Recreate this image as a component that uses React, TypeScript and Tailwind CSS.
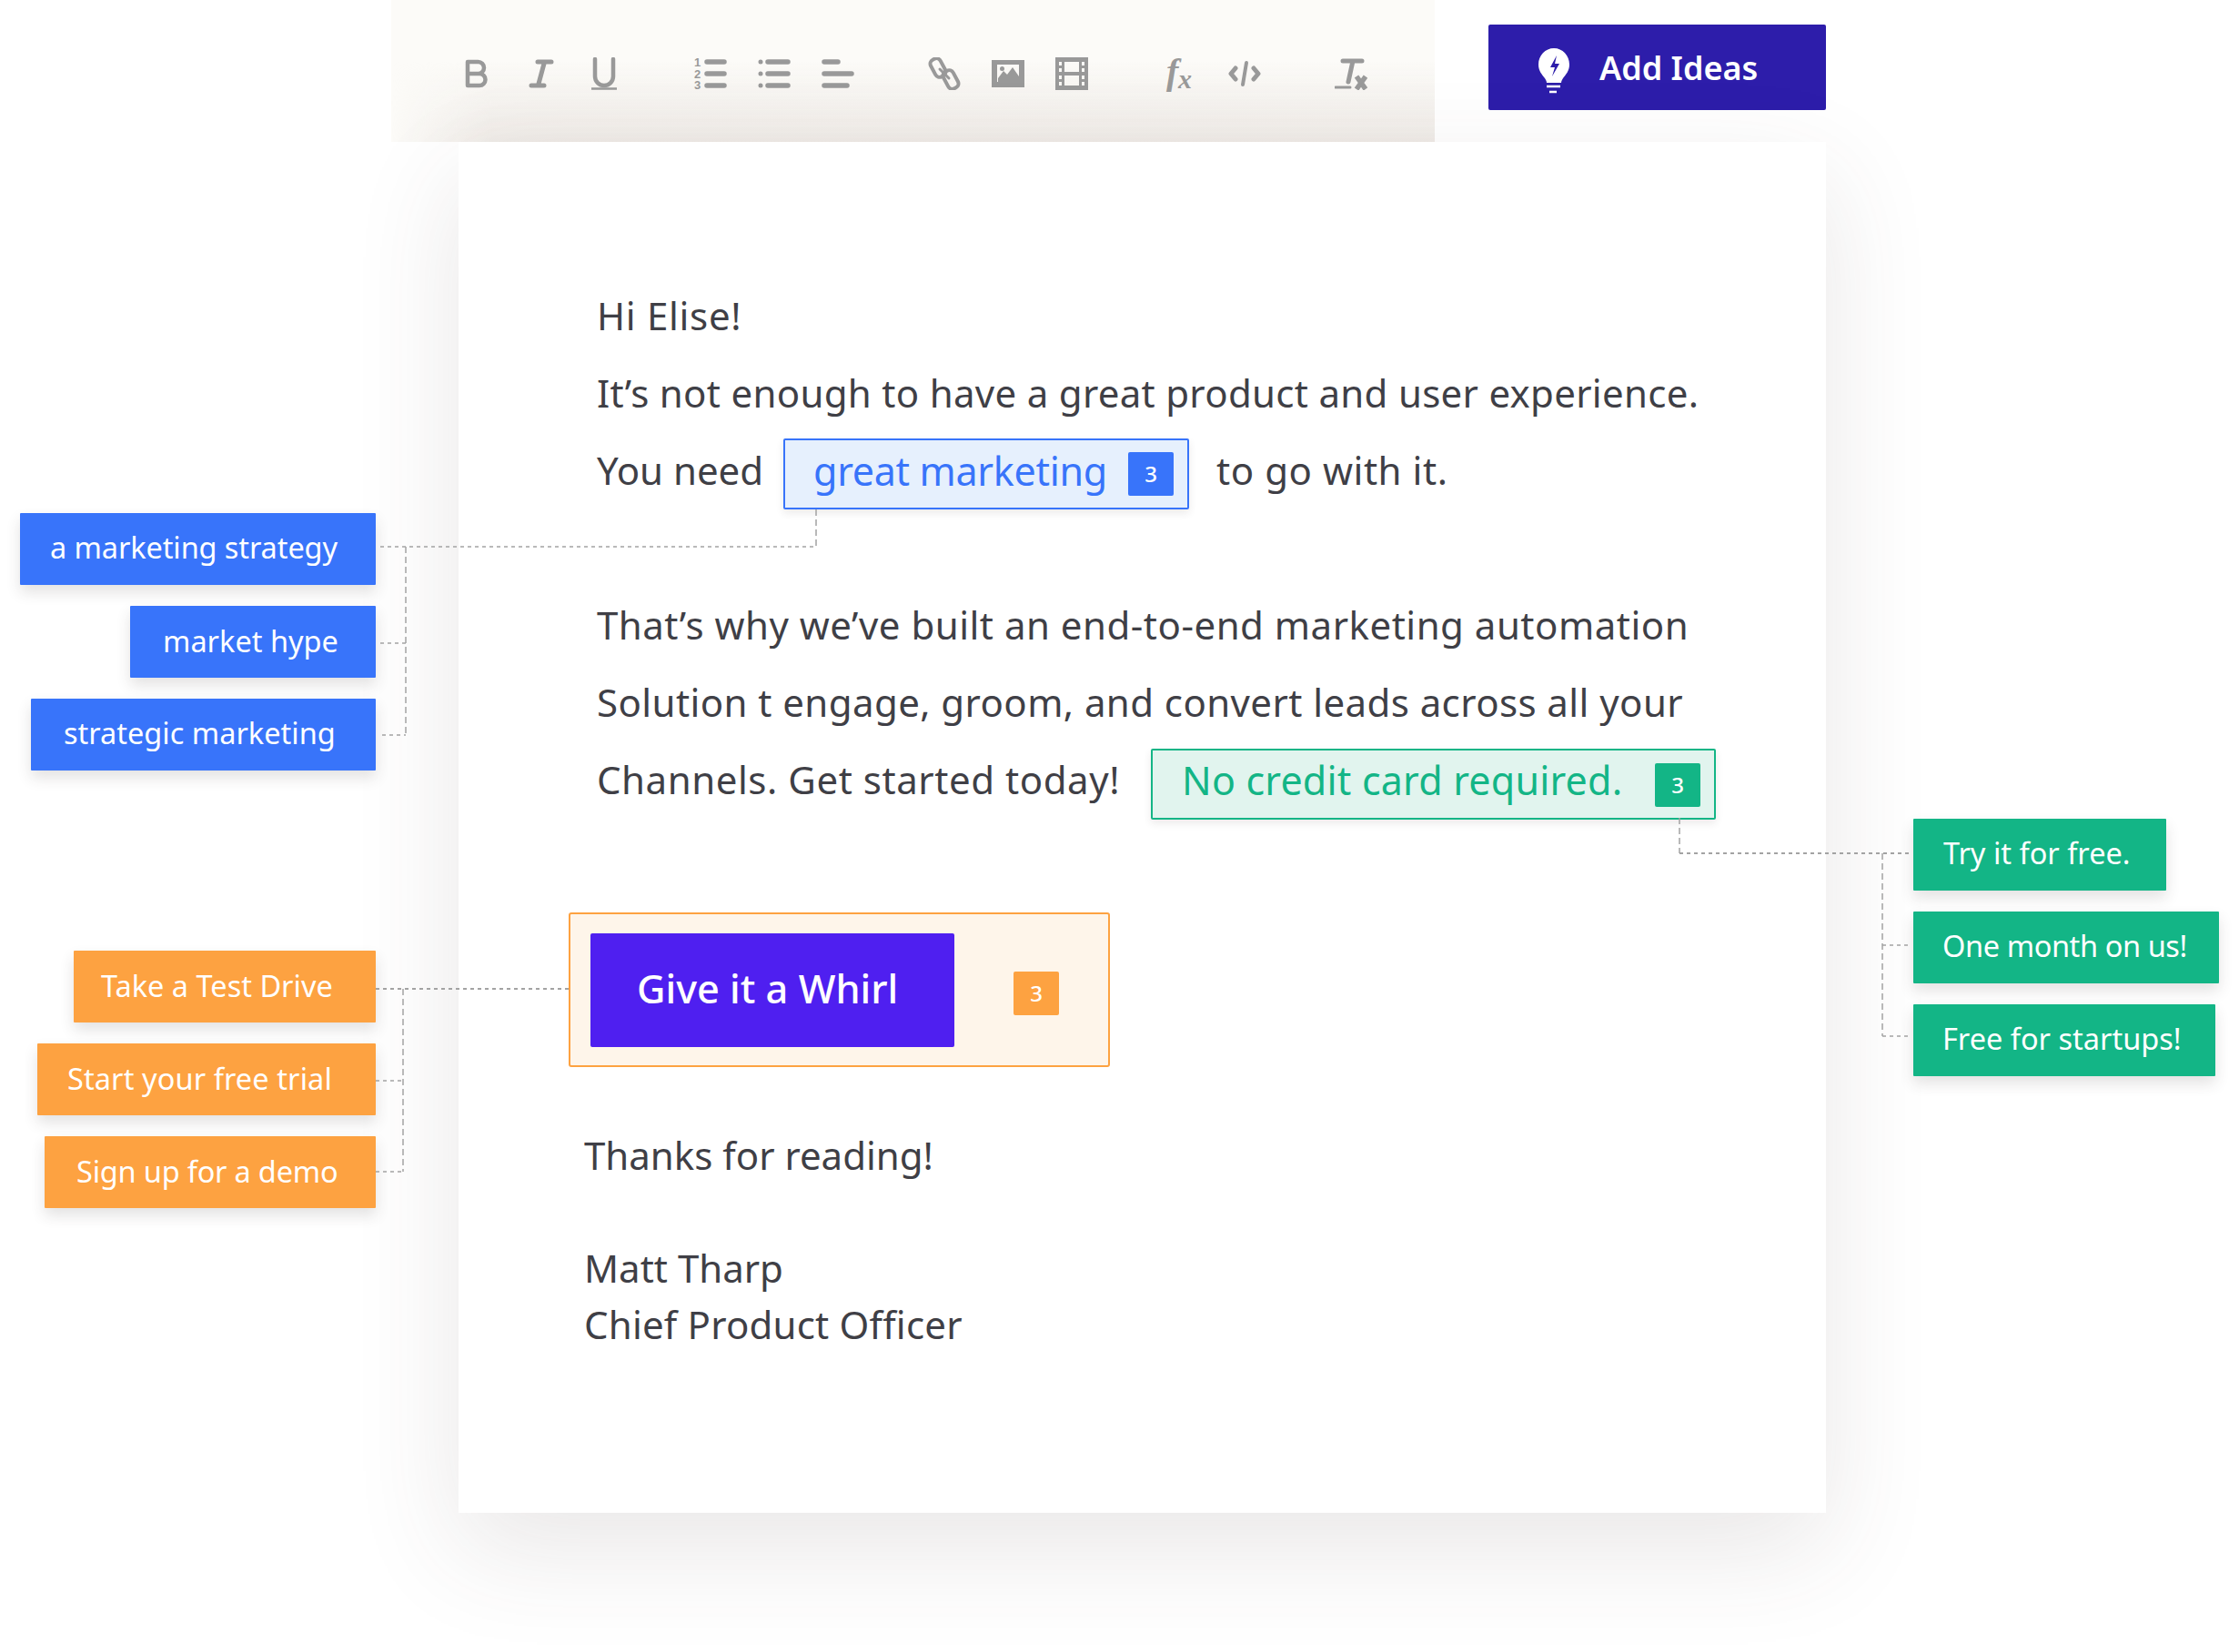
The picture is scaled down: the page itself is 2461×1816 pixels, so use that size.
import React from 'react';

const FONT = 'font-["Noto_Sans",sans-serif]';

function Cell({ children }: { children: React.ReactNode }) {
  return <div className="w-[70px] h-[36px] flex justify-center items-center">{children}</div>;
}

function Ico({ children }: { children: React.ReactNode }) {
  return (
    <svg width="36" height="36" viewBox="0 0 36 36" fill="none" stroke="#999" strokeWidth="4.500" strokeLinecap="round" strokeLinejoin="round">
      {children}
    </svg>
  );
}

function Toolbar() {
  return (
    <div className="relative w-[1147px] h-[156px] ml-[430px] pl-[59px] pt-[6px] flex items-center gap-[47px] bg-[#fcfbf8]">
      <div className="absolute left-0 right-0 bottom-0 h-[90px] bg-gradient-to-b from-transparent to-[#efebe7] [mask-image:linear-gradient(to_right,transparent,black_110px)]" />
      <div className="relative flex">
        <Cell><Ico><path d="M8 5h11.500a6.500 6.500 0 0 1 0 13H8zM8 18h13a6.500 6.500 0 0 1 0 13H8z" /></Ico></Cell>
        <Cell><Ico><path d="M15 5h15M8 31h14M22.500 5 15.500 31" strokeWidth="5" /></Ico></Cell>
        <Cell><Ico><path d="M8 2v19a10 10 0 0 0 20 0V2" /><path d="M4 34.500h28" strokeWidth="2.500" strokeLinecap="butt" /></Ico></Cell>
      </div>
      <div className="relative flex">
        <Cell>
          <svg width="44" height="44" viewBox="-4 -4 44 44" fill="none" stroke="#999" strokeLinecap="round">
            <path d="M14 5h19M14 18h19M14 31h19" strokeWidth="5.500" />
            <text x="0" y="10" fontSize="13" fontWeight="700" fill="#999" stroke="none" fontFamily="Liberation Sans, sans-serif">1</text>
            <text x="0" y="23" fontSize="13" fontWeight="700" fill="#999" stroke="none" fontFamily="Liberation Sans, sans-serif">2</text>
            <text x="0" y="35" fontSize="13" fontWeight="700" fill="#999" stroke="none" fontFamily="Liberation Sans, sans-serif">3</text>
          </svg>
        </Cell>
        <Cell><Ico><path d="M11 5h22M11 18h22M11 31h22" strokeWidth="5.500" /><circle cx="3" cy="5" r="2.500" fill="#999" stroke="none" /><circle cx="3" cy="18" r="2.500" fill="#999" stroke="none" /><circle cx="3" cy="31" r="2.500" fill="#999" stroke="none" /></Ico></Cell>
        <Cell><Ico><path d="M3 5h15M3 18h30M3 31h25" strokeWidth="5.500" /></Ico></Cell>
      </div>
      <div className="relative flex">
        <Cell>
          <Ico>
            <rect x="5" y="1" width="12" height="21" rx="5" transform="rotate(-28 11 11.500)" strokeWidth="4" />
            <rect x="19" y="14" width="12" height="21" rx="5" transform="rotate(-28 25 24.500)" strokeWidth="4" />
            <path d="M13 13l10 10" strokeWidth="3" />
          </Ico>
        </Cell>
        <Cell>
          <svg width="36" height="36" viewBox="0 0 36 36">
            <path fillRule="evenodd" fill="#999" d="M0 3h36v30H0zM6 8v19h24V8z" />
            <path fill="#999" d="M7 27v-4l6-8 4 4 6-8 7 10v6z" />
            <circle cx="11.500" cy="12.500" r="2.500" fill="#999" />
          </svg>
        </Cell>
        <Cell>
          <svg width="36" height="36" viewBox="0 0 36 36">
            <path fillRule="evenodd" fill="#999" d="M0 0h36v36H0zM10 5v11h16V5zM10 20v11h16V20zM4 5v4h3V5zM4 12v4h3v-4zM4 20v4h3v-4zM4 27v4h3v-4zM29 5v4h3V5zM29 12v4h3v-4zM29 20v4h3v-4zM29 27v4h3v-4z" />
          </svg>
        </Cell>
      </div>
      <div className="relative flex ml-[3px]">
        <Cell>
          <svg width="60" height="60" viewBox="-11 -11 60 60">
            <text x="3" y="30" fontSize="40" fontStyle="italic" fontWeight="700" fill="#999" fontFamily="Liberation Serif, serif">f</text>
            <text x="16" y="35" fontSize="30" fontStyle="italic" fontWeight="700" fill="#999" fontFamily="Liberation Serif, serif">x</text>
          </svg>
        </Cell>
        <Cell><Ico><path d="M8 12 3 18l5 6M28 12l5 6-5 6" strokeWidth="5" /><path d="M20 6 16 30" strokeWidth="4" /></Ico></Cell>
      </div>
      <div className="relative flex">
        <Cell>
          <Ico>
            <path d="M9 4h21M20 4l-5 23" strokeWidth="5" />
            <path d="M1 33h16" strokeWidth="3" />
            <path d="M24 21l10 14M34 21l-10 14" strokeWidth="5.500" strokeLinecap="butt" />
          </Ico>
        </Cell>
      </div>
    </div>
  );
}

function AddIdeas() {
  return (
    <div className="absolute left-[1636px] top-[27px] w-[371px] h-[94px] pl-[55px] rounded-[2px] bg-[#2d1daa] flex items-center gap-[33px] text-white text-[36px] font-semibold">
      <svg width="34" height="50" viewBox="0 0 34 50" className="shrink-0 mt-[8px]">
        <path fill="#fff" d="M17 0C7.500 0 0 8 0 18c0 7 4 11 7 15 1 2 2 3 2 5h16c0-2 1-3 2-5 3-4 7-8 7-15C34 8 26.500 0 17 0z" />
        <path fill="#2d1daa" d="M20 8l-7 13h5l-3 10 8-14h-5z" />
        <path stroke="#fff" strokeWidth="2.500" d="M9 42h15M12 48h8" />
      </svg>
      <span className="mt-[2px]">Add Ideas</span>
    </div>
  );
}

function Badge({ className }: { className: string }) {
  return (
    <span className={`flex items-center justify-center w-[50px] h-[48px] rounded-[2px] text-white text-[24px] font-medium tracking-normal ${className}`}>3</span>
  );
}

function Tag({ children, className }: { children: React.ReactNode; className: string }) {
  return (
    <div className={`h-[79px] flex items-center whitespace-nowrap text-white text-[32.500px] rounded-[1px] shadow-[0_8px_16px_rgba(60,50,50,0.14)] ${className}`}>
      {children}
    </div>
  );
}

function Connectors() {
  return (
    <svg className="absolute left-0 top-0 pointer-events-none" width="2461" height="1816" fill="none" stroke="#a3a3a3" strokeWidth="1.500">
      <g strokeDasharray="4 4">
        <path d="M418 601H897" />
        <path d="M418 707H446M420 808H446" />
        <path d="M413 1087H625" strokeWidth="2" />
        <path d="M413 1188H443M413 1288H443" />
        <path d="M1846 938H2098" strokeWidth="2" />
        <path d="M2069 1039H2098M2069 1139H2098" />
      </g>
      <g strokeDasharray="7 4">
        <path d="M897 560V601M446 601V808" />
        <path d="M443 1087V1288" />
        <path d="M1846 899V938M2069 938V1139" />
      </g>
    </svg>
  );
}

export default function App() {
  return (
    <div className={`relative w-[2461px] h-[1816px] overflow-hidden bg-white ${FONT}`}>
      <Toolbar />
      <AddIdeas />

      <div className="relative w-[1503px] h-[1507px] ml-[504px] pt-[148px] bg-white text-[#3f3f46] text-[42px] shadow-[0_40px_110px_rgba(70,60,60,0.12)]">
        <div className="pl-[152px]">
          <div className="h-[85px] flex items-center tracking-[0.7px]">Hi Elise!</div>
          <div className="h-[85px] flex items-center whitespace-nowrap tracking-[0.3px]">It’s not enough to have a great product and user experience.</div>
          <div className="h-[85px] flex items-center whitespace-nowrap">
            <span className="w-[205px]">You need</span>
            <div className="w-[446px] h-[78px] mt-[9px] pl-[31px] pr-[15px] pb-[6px] flex items-center justify-between rounded-[2px] border-2 border-[#3874fa] bg-[#e6f0fd] text-[#3874fa] text-[43px] tracking-[-0.3px] shadow-[0_4px_8px_rgba(60,50,50,0.1)]">
              <span>great marketing</span>
              <Badge className="bg-[#3874fa] mt-[6px]" />
            </div>
            <span className="ml-[30px] tracking-[0.55px]">to go with it.</span>
          </div>
          <div className="mt-[85px] h-[85px] flex items-center whitespace-nowrap tracking-[0.5px]">That’s why we’ve built an end-to-end marketing automation</div>
          <div className="h-[85px] flex items-center whitespace-nowrap tracking-[0.42px]">Solution t engage, groom, and convert leads across all your</div>
          <div className="h-[85px] flex items-center whitespace-nowrap">
            <span className="w-[609px] tracking-[0.55px]">Channels. Get started today!</span>
            <div className="w-[621px] h-[78px] mt-[11px] pl-[32px] pr-[15px] pb-[7px] flex items-center justify-between rounded-[2px] border-2 border-[#13b586] bg-[#e1f4ee] text-[#13b586] text-[43px] tracking-[0.2px] shadow-[0_4px_8px_rgba(60,50,50,0.1)]">
              <span>No credit card required.</span>
              <Badge className="bg-[#13b586] mt-[9px]" />
            </div>
          </div>
        </div>

        <div className="ml-[121px] mt-[104px] w-[595px] h-[170px] pl-[22px] pr-[54px] flex items-center justify-between rounded-[3px] border-2 border-[#fda241] bg-[#fef5ea]">
          <div className="w-[400px] h-[125px] pl-[51px] pb-[2px] flex items-center rounded-[2px] bg-[#4f1ff0] text-white text-[43.300px] font-medium">Give it a Whirl</div>
          <Badge className="bg-[#fda241] mt-[8px]" />
        </div>

        <div className="pl-[138px]">
          <div className="mt-[65px] h-[62px] flex items-center">Thanks for reading!</div>
          <div className="mt-[62px] h-[62px] flex items-center">Matt Tharp</div>
          <div className="h-[62px] flex items-center tracking-[0.2px]">Chief Product Officer</div>
        </div>
      </div>

      <div className="absolute right-[2048px] top-[564px] flex flex-col items-end gap-[23px]">
        <Tag className="w-[391px] pl-[33px] pb-[3px] bg-[#3874fa] tracking-[-0.1px]">a marketing strategy</Tag>
        <Tag className="w-[270px] pl-[36px] pb-[1px] bg-[#3874fa]">market hype</Tag>
        <Tag className="w-[379px] pl-[36px] pb-[3px] bg-[#3874fa]">strategic marketing</Tag>
      </div>

      <div className="absolute right-[2048px] top-[1045px] flex flex-col items-end gap-[23px]">
        <Tag className="w-[332px] pl-[30px] pb-[1px] bg-[#fda241]">Take a Test Drive</Tag>
        <Tag className="w-[372px] pl-[33px] pb-[1px] bg-[#fda241] tracking-[0.1px]">Start your free trial</Tag>
        <Tag className="w-[364px] pl-[35px] pb-[1px] bg-[#fda241] tracking-[-0.2px]">Sign up for a demo</Tag>
      </div>

      <div className="absolute left-[2103px] top-[900px] flex flex-col items-start gap-[23px]">
        <Tag className="w-[278px] pl-[33px] pb-[3px] bg-[#13b586]">Try it for free.</Tag>
        <Tag className="w-[336px] pl-[32px] pb-[3px] bg-[#13b586] tracking-[-0.4px]">One month on us!</Tag>
        <Tag className="w-[332px] pl-[32px] pb-[3px] bg-[#13b586]">Free for startups!</Tag>
      </div>

      <Connectors />
    </div>
  );
}
